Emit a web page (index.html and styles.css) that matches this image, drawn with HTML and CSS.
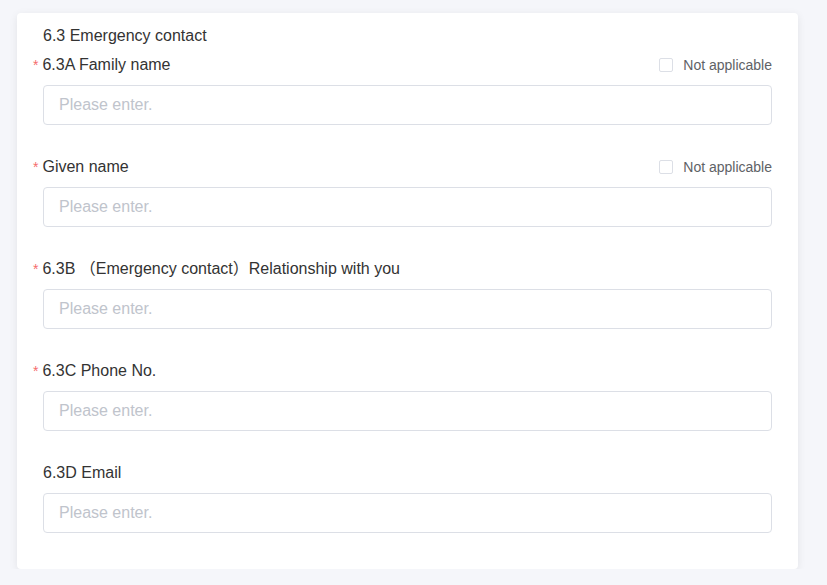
FILE: index.html
```html
<!DOCTYPE html>
<html lang="en">
<head>
    <meta charset="UTF-8">
    <meta name="viewport" content="width=device-width, initial-scale=1.0">
    <title>Emergency contact</title>
    <link rel="stylesheet" href="styles.css">
</head>
<body>
    <div class="form-card">
        <div class="section-title">6.3 Emergency contact</div>

        <div class="form-item">
            <div class="label-row">
                <label class="required" for="familyName">6.3A Family name</label>
                <label class="na"><span class="checkbox"></span>Not applicable</label>
            </div>
            <input type="text" id="familyName" placeholder="Please enter.">
        </div>

        <div class="form-item">
            <div class="label-row">
                <label class="required" for="givenName">Given name</label>
                <label class="na"><span class="checkbox"></span>Not applicable</label>
            </div>
            <input type="text" id="givenName" placeholder="Please enter.">
        </div>

        <div class="form-item">
            <div class="label-row">
                <label class="required" for="relation">6.3B （Emergency contact）Relationship with you</label>
            </div>
            <input type="text" id="relation" placeholder="Please enter.">
        </div>

        <div class="form-item">
            <div class="label-row">
                <label class="required" for="phone">6.3C Phone No.</label>
            </div>
            <input type="text" id="phone" placeholder="Please enter.">
        </div>

        <div class="form-item">
            <div class="label-row">
                <label for="email">6.3D Email</label>
            </div>
            <input type="text" id="email" placeholder="Please enter.">
        </div>
    </div>
</body>
</html>
```

FILE: styles.css
```css
body {
    margin: 0;
    padding: 13px 0 0 17px;
    background: #f5f6fa;
    font-family: "Liberation Sans", Arial, "Noto Sans CJK SC", sans-serif;
    color: #333;
}

.form-card {
    width: 729px;
    height: 508px;
    padding: 12px 26px 36px;
    background: #fff;
    border-radius: 4px;
    box-shadow: 0 2px 8px rgba(0, 0, 0, 0.08);
}

.section-title {
    font-size: 16px;
    line-height: 22px;
    margin-bottom: 6px;
}

.form-item {
    margin-bottom: 30px;
}

.form-item:last-child {
    margin-bottom: 0;
}

.label-row {
    display: flex;
    justify-content: space-between;
    align-items: center;
    height: 22px;
    padding-top: 2px;
    box-sizing: border-box;
    margin-bottom: 10px;
}

.label-row label {
    font-size: 16px;
    line-height: 20px;
}

.required::before {
    content: "*";
    color: #f56c6c;
    margin-left: -10px;
    margin-right: 4px;
    font-size: 14px;
}

.label-row .na {
    display: flex;
    align-items: center;
    font-size: 14px;
    color: #606266;
}

.checkbox {
    width: 12px;
    height: 12px;
    border: 1px solid #dcdfe6;
    border-radius: 2px;
    margin-right: 10px;
}

input[type="text"] {
    display: block;
    width: 100%;
    height: 40px;
    padding: 0 15px;
    border: 1px solid #dcdfe6;
    border-radius: 4px;
    box-sizing: border-box;
    font-family: inherit;
    font-size: 16px;
    color: #606266;
    outline: none;
}

input::placeholder {
    color: #c0c4cc;
}
```
